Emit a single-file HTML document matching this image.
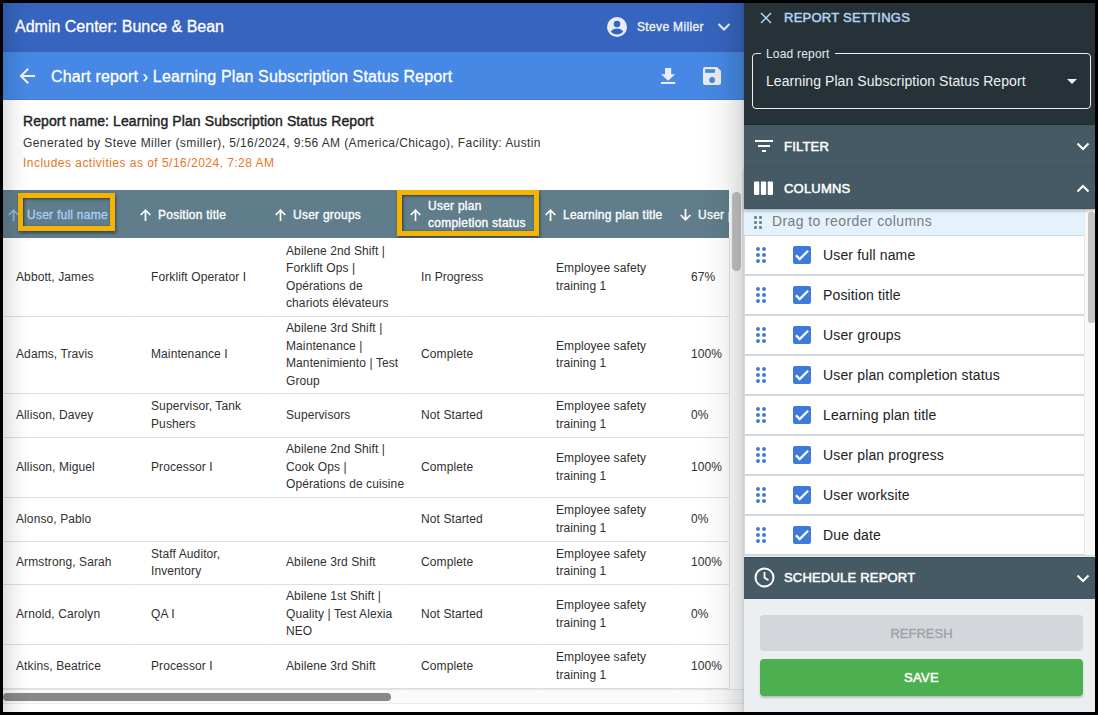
<!DOCTYPE html>
<html><head><meta charset="utf-8">
<style>
*{box-sizing:border-box;margin:0;padding:0}
html,body{width:1098px;height:715px;overflow:hidden;background:#000;font-family:"Liberation Sans",sans-serif}
.abs{position:absolute}
#app{position:absolute;left:3px;top:3px;width:1092px;height:709px;background:#fff;overflow:hidden}
#topbar{position:absolute;left:0;top:0;width:741px;height:49px;background:#3664bf;border-bottom:1px solid #3461b9}
#subbar{position:absolute;left:0;top:49px;width:741px;height:48px;background:#4688e3;border-bottom:1px solid #3c7fdd}
.wt{color:#fff;white-space:nowrap}
#left{position:absolute;left:0;top:97px;width:741px;height:612px;background:#fff}
.th{position:absolute;top:1px;height:48px;color:#fff;font-size:12px;font-weight:400;-webkit-text-stroke:0.35px currentColor;letter-spacing:0.25px;white-space:nowrap}
.cellw{position:absolute;width:135px;padding-left:13px;padding-top:1px;display:flex;align-items:center}
.cell{font-size:12px;line-height:17.5px;color:#303030;letter-spacing:0.1px;white-space:nowrap}
.rl{position:absolute;left:0;width:726px;height:1px;background:#dedede}
#panel{position:absolute;left:741px;top:0;width:351px;height:709px;background:#263238}
.bar{position:absolute;left:0;width:351px;background:#455a64}
.bt{position:absolute;left:40px;color:#fff;font-size:13px;font-weight:400;-webkit-text-stroke:0.5px #fff;letter-spacing:0.2px;white-space:nowrap}
.item{position:absolute;left:1px;width:339px;height:38px;background:#fff}
.dots{position:absolute;left:11px;top:11px}
.cb{position:absolute;left:48px;top:10px}
.it{position:absolute;left:78px;top:0;line-height:38px;font-size:14px;color:#212121;white-space:nowrap;letter-spacing:0.15px}
</style></head><body>
<div id="app">
  <div id="topbar">
    <div class="abs wt" style="left:12px;top:14px;font-size:16px;line-height:19px;-webkit-text-stroke:0.3px #fff">Admin Center: Bunce &amp; Bean</div>
    <svg class="abs" style="left:604px;top:14px" width="20" height="20" viewBox="0 0 20 20"><circle cx="10" cy="10" r="10" fill="#e9edf3"/><circle cx="10" cy="7" r="3.3" fill="#3664bf"/><path d="M3.8 14.6 C5 12.2 7.5 11.4 10 11.4 C12.5 11.4 15 12.2 16.2 14.6 C14.8 16.6 12.6 17.6 10 17.6 C7.4 17.6 5.2 16.6 3.8 14.6Z" fill="#3664bf"/></svg>
    <div class="abs wt" style="left:634px;top:17px;font-size:12px;font-weight:400;-webkit-text-stroke:0.35px #eef2f8;letter-spacing:0.35px;line-height:15px;color:#eef2f8">Steve Miller</div>
    <svg class="abs" style="left:714px;top:19px" width="14" height="10" viewBox="0 0 14 10"><path d="M1.5 2 L7 7.5 L12.5 2" stroke="#eef2f8" stroke-width="2" fill="none"/></svg>
  </div>
  <div id="subbar">
    <svg class="abs" style="left:15px;top:15px" width="19" height="19" viewBox="0 0 19 19"><path d="M17 9 H3 M10.2 1.7 L2.9 9 L10.2 16.3" stroke="#eef2f8" stroke-width="2" fill="none"/></svg>
    <div class="abs wt" style="left:48px;top:15px;font-size:16px;line-height:19px;letter-spacing:0.15px;-webkit-text-stroke:0.3px #fff">Chart report › Learning Plan Subscription Status Report</div>
    <svg class="abs" style="left:658px;top:16px" width="15" height="16" viewBox="0 0 15 16"><path d="M4 0 H10.2 V6.2 H14.2 L7.1 12.8 L0 6.2 H4Z" fill="#e9edf3"/><rect x="0" y="13.9" width="14.2" height="2.1" fill="#e9edf3"/></svg>
    <svg class="abs" style="left:700px;top:15px" width="18" height="18" viewBox="0 0 18 18"><path d="M2 0 H14 L18 4 V16 A2 2 0 0 1 16 18 H2 A2 2 0 0 1 0 16 V2 A2 2 0 0 1 2 0Z" fill="#e9edf3"/><rect x="2.2" y="2.2" width="9.8" height="3.6" fill="#4688e3"/><circle cx="9.1" cy="13" r="2.9" fill="#4688e3"/></svg>
  </div>
  <div id="left">
    <div class="abs" style="left:20px;top:13px;font-size:14px;font-weight:400;-webkit-text-stroke:0.4px #222;color:#222;letter-spacing:0.1px;white-space:nowrap;line-height:17px">Report name: Learning Plan Subscription Status Report</div>
    <div class="abs" style="left:20px;top:36px;font-size:12px;color:#333;letter-spacing:0.4px;white-space:nowrap;line-height:15px">Generated by Steve Miller (smiller), 5/16/2024, 9:56 AM (America/Chicago), Facility: Austin</div>
    <div class="abs" style="left:20px;top:56px;font-size:12px;color:#e8761f;letter-spacing:0.47px;white-space:nowrap;line-height:15px">Includes activities as of 5/16/2024, 7:28 AM</div>

    <!-- table header -->
    <div class="abs" style="left:0;top:90px;width:726px;height:48px;background:#607d8b;overflow:hidden">
      <svg class="abs" style="left:5px;top:19px" width="11" height="12" viewBox="0 0 11 12"><path d="M5.5 12 V1.2 M0.7 6 L5.5 1.2 L10.3 6" stroke="#90b4dc" stroke-width="1.7" fill="none"/></svg>
      <div class="th" style="left:24px;line-height:48px;color:#a8cdf4">User full name</div>
      <div class="abs" style="left:15px;top:3px;width:97px;height:38px;border:5px solid #f5b400;box-shadow:1px 2px 3px rgba(0,0,0,0.45),inset 1px 1px 3px rgba(0,0,0,0.55)"></div>

      <svg class="abs" style="left:137px;top:19px" width="11" height="12" viewBox="0 0 11 12"><path d="M5.5 12 V1.2 M0.7 6 L5.5 1.2 L10.3 6" stroke="#fff" stroke-width="1.7" fill="none"/></svg>
      <div class="th" style="left:155px;line-height:48px">Position title</div>

      <svg class="abs" style="left:272px;top:19px" width="11" height="12" viewBox="0 0 11 12"><path d="M5.5 12 V1.2 M0.7 6 L5.5 1.2 L10.3 6" stroke="#fff" stroke-width="1.7" fill="none"/></svg>
      <div class="th" style="left:290px;line-height:48px">User groups</div>

      <svg class="abs" style="left:407px;top:19px" width="11" height="12" viewBox="0 0 11 12"><path d="M5.5 12 V1.2 M0.7 6 L5.5 1.2 L10.3 6" stroke="#fff" stroke-width="1.7" fill="none"/></svg>
      <div class="th" style="left:425px;top:8px;line-height:16.5px">User plan<br>completion status</div>
      <div class="abs" style="left:394px;top:0px;width:142px;height:46px;border:5px solid #f5b400;box-shadow:1px 2px 3px rgba(0,0,0,0.45),inset 1px 1px 3px rgba(0,0,0,0.55)"></div>

      <svg class="abs" style="left:542px;top:19px" width="11" height="12" viewBox="0 0 11 12"><path d="M5.5 12 V1.2 M0.7 6 L5.5 1.2 L10.3 6" stroke="#fff" stroke-width="1.7" fill="none"/></svg>
      <div class="th" style="left:560px;line-height:48px">Learning plan title</div>

      <svg class="abs" style="left:677px;top:19px" width="11" height="12" viewBox="0 0 11 12"><path d="M5.5 0 V10.8 M0.7 6 L5.5 10.8 L10.3 6" stroke="#fff" stroke-width="1.7" fill="none"/></svg>
      <div class="th" style="left:695px;line-height:48px">User plan progress</div>
    </div>
    <div id="rows"><div class="cellw" style="left:0px;top:138px;height:78px"><div class="cell">Abbott, James</div></div>
<div class="cellw" style="left:135px;top:138px;height:78px"><div class="cell">Forklift Operator I</div></div>
<div class="cellw" style="left:270px;top:138px;height:78px"><div class="cell">Abilene 2nd Shift |<br>Forklift Ops |<br>Opérations de<br>chariots élévateurs</div></div>
<div class="cellw" style="left:405px;top:138px;height:78px"><div class="cell">In Progress</div></div>
<div class="cellw" style="left:540px;top:138px;height:78px"><div class="cell">Employee safety<br>training 1</div></div>
<div class="cellw" style="left:675px;top:138px;height:78px"><div class="cell">67%</div></div>
<div class="rl" style="left:0;top:216px;width:726px;background:#f0f0f0"></div>
<div class="rl" style="left:0px;top:216px;width:131px"></div>
<div class="rl" style="left:132px;top:216px;width:134px"></div>
<div class="rl" style="left:267px;top:216px;width:134px"></div>
<div class="rl" style="left:402px;top:216px;width:134px"></div>
<div class="rl" style="left:537px;top:216px;width:134px"></div>
<div class="rl" style="left:672px;top:216px;width:54px"></div>
<div class="cellw" style="left:0px;top:216px;height:77px"><div class="cell">Adams, Travis</div></div>
<div class="cellw" style="left:135px;top:216px;height:77px"><div class="cell">Maintenance I</div></div>
<div class="cellw" style="left:270px;top:216px;height:77px"><div class="cell">Abilene 3rd Shift |<br>Maintenance |<br>Mantenimiento | Test<br>Group</div></div>
<div class="cellw" style="left:405px;top:216px;height:77px"><div class="cell">Complete</div></div>
<div class="cellw" style="left:540px;top:216px;height:77px"><div class="cell">Employee safety<br>training 1</div></div>
<div class="cellw" style="left:675px;top:216px;height:77px"><div class="cell">100%</div></div>
<div class="rl" style="left:0;top:293px;width:726px;background:#f0f0f0"></div>
<div class="rl" style="left:0px;top:293px;width:131px"></div>
<div class="rl" style="left:132px;top:293px;width:134px"></div>
<div class="rl" style="left:267px;top:293px;width:134px"></div>
<div class="rl" style="left:402px;top:293px;width:134px"></div>
<div class="rl" style="left:537px;top:293px;width:134px"></div>
<div class="rl" style="left:672px;top:293px;width:54px"></div>
<div class="cellw" style="left:0px;top:293px;height:44px"><div class="cell">Allison, Davey</div></div>
<div class="cellw" style="left:135px;top:293px;height:44px"><div class="cell">Supervisor, Tank<br>Pushers</div></div>
<div class="cellw" style="left:270px;top:293px;height:44px"><div class="cell">Supervisors</div></div>
<div class="cellw" style="left:405px;top:293px;height:44px"><div class="cell">Not Started</div></div>
<div class="cellw" style="left:540px;top:293px;height:44px"><div class="cell">Employee safety<br>training 1</div></div>
<div class="cellw" style="left:675px;top:293px;height:44px"><div class="cell">0%</div></div>
<div class="rl" style="left:0;top:337px;width:726px;background:#f0f0f0"></div>
<div class="rl" style="left:0px;top:337px;width:131px"></div>
<div class="rl" style="left:132px;top:337px;width:134px"></div>
<div class="rl" style="left:267px;top:337px;width:134px"></div>
<div class="rl" style="left:402px;top:337px;width:134px"></div>
<div class="rl" style="left:537px;top:337px;width:134px"></div>
<div class="rl" style="left:672px;top:337px;width:54px"></div>
<div class="cellw" style="left:0px;top:337px;height:60px"><div class="cell">Allison, Miguel</div></div>
<div class="cellw" style="left:135px;top:337px;height:60px"><div class="cell">Processor I</div></div>
<div class="cellw" style="left:270px;top:337px;height:60px"><div class="cell">Abilene 2nd Shift |<br>Cook Ops |<br>Opérations de cuisine</div></div>
<div class="cellw" style="left:405px;top:337px;height:60px"><div class="cell">Complete</div></div>
<div class="cellw" style="left:540px;top:337px;height:60px"><div class="cell">Employee safety<br>training 1</div></div>
<div class="cellw" style="left:675px;top:337px;height:60px"><div class="cell">100%</div></div>
<div class="rl" style="left:0;top:397px;width:726px;background:#f0f0f0"></div>
<div class="rl" style="left:0px;top:397px;width:131px"></div>
<div class="rl" style="left:132px;top:397px;width:134px"></div>
<div class="rl" style="left:267px;top:397px;width:134px"></div>
<div class="rl" style="left:402px;top:397px;width:134px"></div>
<div class="rl" style="left:537px;top:397px;width:134px"></div>
<div class="rl" style="left:672px;top:397px;width:54px"></div>
<div class="cellw" style="left:0px;top:397px;height:44px"><div class="cell">Alonso, Pablo</div></div>
<div class="cellw" style="left:405px;top:397px;height:44px"><div class="cell">Not Started</div></div>
<div class="cellw" style="left:540px;top:397px;height:44px"><div class="cell">Employee safety<br>training 1</div></div>
<div class="cellw" style="left:675px;top:397px;height:44px"><div class="cell">0%</div></div>
<div class="rl" style="left:0;top:441px;width:726px;background:#f0f0f0"></div>
<div class="rl" style="left:0px;top:441px;width:131px"></div>
<div class="rl" style="left:132px;top:441px;width:134px"></div>
<div class="rl" style="left:267px;top:441px;width:134px"></div>
<div class="rl" style="left:402px;top:441px;width:134px"></div>
<div class="rl" style="left:537px;top:441px;width:134px"></div>
<div class="rl" style="left:672px;top:441px;width:54px"></div>
<div class="cellw" style="left:0px;top:441px;height:43px"><div class="cell">Armstrong, Sarah</div></div>
<div class="cellw" style="left:135px;top:441px;height:43px"><div class="cell">Staff Auditor,<br>Inventory</div></div>
<div class="cellw" style="left:270px;top:441px;height:43px"><div class="cell">Abilene 3rd Shift</div></div>
<div class="cellw" style="left:405px;top:441px;height:43px"><div class="cell">Complete</div></div>
<div class="cellw" style="left:540px;top:441px;height:43px"><div class="cell">Employee safety<br>training 1</div></div>
<div class="cellw" style="left:675px;top:441px;height:43px"><div class="cell">100%</div></div>
<div class="rl" style="left:0;top:484px;width:726px;background:#f0f0f0"></div>
<div class="rl" style="left:0px;top:484px;width:131px"></div>
<div class="rl" style="left:132px;top:484px;width:134px"></div>
<div class="rl" style="left:267px;top:484px;width:134px"></div>
<div class="rl" style="left:402px;top:484px;width:134px"></div>
<div class="rl" style="left:537px;top:484px;width:134px"></div>
<div class="rl" style="left:672px;top:484px;width:54px"></div>
<div class="cellw" style="left:0px;top:484px;height:60px"><div class="cell">Arnold, Carolyn</div></div>
<div class="cellw" style="left:135px;top:484px;height:60px"><div class="cell">QA I</div></div>
<div class="cellw" style="left:270px;top:484px;height:60px"><div class="cell">Abilene 1st Shift |<br>Quality | Test Alexia<br>NEO</div></div>
<div class="cellw" style="left:405px;top:484px;height:60px"><div class="cell">Not Started</div></div>
<div class="cellw" style="left:540px;top:484px;height:60px"><div class="cell">Employee safety<br>training 1</div></div>
<div class="cellw" style="left:675px;top:484px;height:60px"><div class="cell">0%</div></div>
<div class="rl" style="left:0;top:544px;width:726px;background:#f0f0f0"></div>
<div class="rl" style="left:0px;top:544px;width:131px"></div>
<div class="rl" style="left:132px;top:544px;width:134px"></div>
<div class="rl" style="left:267px;top:544px;width:134px"></div>
<div class="rl" style="left:402px;top:544px;width:134px"></div>
<div class="rl" style="left:537px;top:544px;width:134px"></div>
<div class="rl" style="left:672px;top:544px;width:54px"></div>
<div class="cellw" style="left:0px;top:544px;height:44px"><div class="cell">Atkins, Beatrice</div></div>
<div class="cellw" style="left:135px;top:544px;height:44px"><div class="cell">Processor I</div></div>
<div class="cellw" style="left:270px;top:544px;height:44px"><div class="cell">Abilene 3rd Shift</div></div>
<div class="cellw" style="left:405px;top:544px;height:44px"><div class="cell">Complete</div></div>
<div class="cellw" style="left:540px;top:544px;height:44px"><div class="cell">Employee safety<br>training 1</div></div>
<div class="cellw" style="left:675px;top:544px;height:44px"><div class="cell">100%</div></div>
<div class="rl" style="left:0;top:588px;width:726px;background:#f0f0f0"></div>
<div class="rl" style="left:0px;top:588px;width:131px"></div>
<div class="rl" style="left:132px;top:588px;width:134px"></div>
<div class="rl" style="left:267px;top:588px;width:134px"></div>
<div class="rl" style="left:402px;top:588px;width:134px"></div>
<div class="rl" style="left:537px;top:588px;width:134px"></div>
<div class="rl" style="left:672px;top:588px;width:54px"></div></div><!--/rows-->
  </div>

  <div class="abs" style="left:0;top:0;width:27px;height:709px;background:linear-gradient(to right,rgba(0,0,0,0.12),rgba(0,0,0,0.05) 40%,rgba(0,0,0,0.015) 75%,rgba(0,0,0,0));z-index:5"></div>
  <div class="abs" style="left:726px;top:235px;width:1px;height:450px;background:#e4e4e4;z-index:4" id="tblr"></div>
  <div class="abs" style="left:0;top:686px;width:741px;height:15px;background:#fafafa;border-top:1px solid #e6e6e6;border-bottom:1px solid #ececec"></div>
  <div class="abs" style="left:0;top:690px;width:388px;height:8px;border-radius:4px;background:#888"></div>
  <div class="abs" style="left:729px;top:189px;width:9px;height:79px;border-radius:4.5px;background:#c4c4c4;z-index:4"></div>
  <div class="abs" style="left:696px;top:0;width:45px;height:709px;background:linear-gradient(to right,rgba(0,0,0,0),rgba(0,0,0,0.04) 55%,rgba(0,0,0,0.14));z-index:5"></div>
  <div class="abs" style="left:739px;top:0;width:2px;height:709px;background:rgba(0,0,0,0.05);z-index:6"></div>
  <div id="panel">
    <svg class="abs" style="left:16px;top:9px" width="12" height="12" viewBox="0 0 12 12"><path d="M1 1 L11 11 M11 1 L1 11" stroke="#b2d3f4" stroke-width="1.5"/></svg>
    <div class="abs" style="left:40px;top:7px;font-size:13px;font-weight:400;-webkit-text-stroke:0.5px #b2d3f4;color:#b2d3f4;line-height:16px;letter-spacing:0.25px;white-space:nowrap">REPORT SETTINGS</div>
    <div class="abs" style="left:8px;top:50px;width:339px;height:56px;border:1.4px solid #eceef0;border-radius:4px"></div>
    <div class="abs" style="left:17px;top:44px;padding:0 5px 0 5px;background:#263238;font-size:12px;color:#e6e9ec;line-height:14px;white-space:nowrap;letter-spacing:0.2px">Load report</div>
    <div class="abs" style="left:22px;top:70px;font-size:14px;color:#eef0f2;line-height:17px;white-space:nowrap;letter-spacing:0.07px">Learning Plan Subscription Status Report</div>
    <svg class="abs" style="left:323px;top:76px" width="10" height="5" viewBox="0 0 10 5"><path d="M0 0 H10 L5 5Z" fill="#eef0f2"/></svg>

    <div class="abs" style="left:0;top:121px;width:351px;height:1px;background:#212b31"></div><div class="bar" style="top:122px;height:42px;border-bottom:1px solid #415560"></div>
    <svg class="abs" style="left:11px;top:137px" width="18" height="12" viewBox="0 0 18 12"><rect x="0" y="0" width="18" height="2" fill="#fff"/><rect x="3" y="5" width="12" height="2" fill="#fff"/><rect x="7" y="10" width="4" height="2" fill="#fff"/></svg>
    <div class="bt" style="top:136px;line-height:16px">FILTER</div>
    <svg class="abs" style="left:332px;top:139px" width="14" height="9" viewBox="0 0 14 9"><path d="M1.5 1.5 L7 7 L12.5 1.5" stroke="#fff" stroke-width="2" fill="none"/></svg>

    <div class="bar" style="top:164px;height:42px;border-bottom:1px solid #3f535c;box-shadow:0 2px 3px rgba(0,0,0,0.25);z-index:2"></div>
    <svg class="abs" style="left:10px;top:178px;z-index:3" width="19" height="14" viewBox="0 0 19 14"><rect x="0" y="0.5" width="5.3" height="13.5" rx="1" fill="#fff"/><rect x="6.85" y="0.5" width="5.3" height="13.5" rx="1" fill="#fff"/><rect x="13.7" y="0.5" width="5.3" height="13.5" rx="1" fill="#fff"/></svg>
    <div class="bt" style="top:178px;line-height:16px;z-index:3">COLUMNS</div>
    <svg class="abs" style="left:332px;top:180.5px;z-index:3" width="14" height="9" viewBox="0 0 14 9"><path d="M1.5 7.5 L7 2 L12.5 7.5" stroke="#fff" stroke-width="2" fill="none"/></svg>

    <div class="abs" style="left:0;top:206px;width:351px;height:348px;background:#cfd8dc;overflow:hidden;border-bottom:1px solid #eef0f1">
      <div class="abs" style="left:0;top:0;width:340px;height:26px;background:#e3f2fd"></div>
      <svg class="abs" style="left:10px;top:7px" width="8" height="13" viewBox="0 0 8 13"><g fill="#6f8693"><rect x="0" y="0" width="3" height="3" rx="1"/><rect x="5" y="0" width="3" height="3" rx="1"/><rect x="0" y="5" width="3" height="3" rx="1"/><rect x="5" y="5" width="3" height="3" rx="1"/><rect x="0" y="10" width="3" height="3" rx="1"/><rect x="5" y="10" width="3" height="3" rx="1"/></g></svg>
      <div class="abs" style="left:28px;top:4px;font-size:14px;color:#7b7b7b;line-height:16px;letter-spacing:0.4px;white-space:nowrap">Drag to reorder columns</div>
      <div id="items"><div class="item" style="top:27px"><svg class="dots" width="11" height="17" viewBox="0 0 11 17"><g fill="#3c7bd9"><circle cx="2" cy="2" r="1.95"/><circle cx="8" cy="2" r="1.95"/><circle cx="2" cy="8" r="1.95"/><circle cx="8" cy="8" r="1.95"/><circle cx="2" cy="14" r="1.95"/><circle cx="8" cy="14" r="1.95"/></g></svg><svg class="cb" width="18" height="18" viewBox="0 0 18 18"><rect width="18" height="18" rx="2" fill="#3c7bd9"/><path d="M2.9 9.3 L6.7 13.1 L15.1 4.7" stroke="#fff" stroke-width="2.2" fill="none"/></svg><div class="it">User full name</div></div>
<div class="item" style="top:67px"><svg class="dots" width="11" height="17" viewBox="0 0 11 17"><g fill="#3c7bd9"><circle cx="2" cy="2" r="1.95"/><circle cx="8" cy="2" r="1.95"/><circle cx="2" cy="8" r="1.95"/><circle cx="8" cy="8" r="1.95"/><circle cx="2" cy="14" r="1.95"/><circle cx="8" cy="14" r="1.95"/></g></svg><svg class="cb" width="18" height="18" viewBox="0 0 18 18"><rect width="18" height="18" rx="2" fill="#3c7bd9"/><path d="M2.9 9.3 L6.7 13.1 L15.1 4.7" stroke="#fff" stroke-width="2.2" fill="none"/></svg><div class="it">Position title</div></div>
<div class="item" style="top:107px"><svg class="dots" width="11" height="17" viewBox="0 0 11 17"><g fill="#3c7bd9"><circle cx="2" cy="2" r="1.95"/><circle cx="8" cy="2" r="1.95"/><circle cx="2" cy="8" r="1.95"/><circle cx="8" cy="8" r="1.95"/><circle cx="2" cy="14" r="1.95"/><circle cx="8" cy="14" r="1.95"/></g></svg><svg class="cb" width="18" height="18" viewBox="0 0 18 18"><rect width="18" height="18" rx="2" fill="#3c7bd9"/><path d="M2.9 9.3 L6.7 13.1 L15.1 4.7" stroke="#fff" stroke-width="2.2" fill="none"/></svg><div class="it">User groups</div></div>
<div class="item" style="top:147px"><svg class="dots" width="11" height="17" viewBox="0 0 11 17"><g fill="#3c7bd9"><circle cx="2" cy="2" r="1.95"/><circle cx="8" cy="2" r="1.95"/><circle cx="2" cy="8" r="1.95"/><circle cx="8" cy="8" r="1.95"/><circle cx="2" cy="14" r="1.95"/><circle cx="8" cy="14" r="1.95"/></g></svg><svg class="cb" width="18" height="18" viewBox="0 0 18 18"><rect width="18" height="18" rx="2" fill="#3c7bd9"/><path d="M2.9 9.3 L6.7 13.1 L15.1 4.7" stroke="#fff" stroke-width="2.2" fill="none"/></svg><div class="it">User plan completion status</div></div>
<div class="item" style="top:187px"><svg class="dots" width="11" height="17" viewBox="0 0 11 17"><g fill="#3c7bd9"><circle cx="2" cy="2" r="1.95"/><circle cx="8" cy="2" r="1.95"/><circle cx="2" cy="8" r="1.95"/><circle cx="8" cy="8" r="1.95"/><circle cx="2" cy="14" r="1.95"/><circle cx="8" cy="14" r="1.95"/></g></svg><svg class="cb" width="18" height="18" viewBox="0 0 18 18"><rect width="18" height="18" rx="2" fill="#3c7bd9"/><path d="M2.9 9.3 L6.7 13.1 L15.1 4.7" stroke="#fff" stroke-width="2.2" fill="none"/></svg><div class="it">Learning plan title</div></div>
<div class="item" style="top:227px"><svg class="dots" width="11" height="17" viewBox="0 0 11 17"><g fill="#3c7bd9"><circle cx="2" cy="2" r="1.95"/><circle cx="8" cy="2" r="1.95"/><circle cx="2" cy="8" r="1.95"/><circle cx="8" cy="8" r="1.95"/><circle cx="2" cy="14" r="1.95"/><circle cx="8" cy="14" r="1.95"/></g></svg><svg class="cb" width="18" height="18" viewBox="0 0 18 18"><rect width="18" height="18" rx="2" fill="#3c7bd9"/><path d="M2.9 9.3 L6.7 13.1 L15.1 4.7" stroke="#fff" stroke-width="2.2" fill="none"/></svg><div class="it">User plan progress</div></div>
<div class="item" style="top:267px"><svg class="dots" width="11" height="17" viewBox="0 0 11 17"><g fill="#3c7bd9"><circle cx="2" cy="2" r="1.95"/><circle cx="8" cy="2" r="1.95"/><circle cx="2" cy="8" r="1.95"/><circle cx="8" cy="8" r="1.95"/><circle cx="2" cy="14" r="1.95"/><circle cx="8" cy="14" r="1.95"/></g></svg><svg class="cb" width="18" height="18" viewBox="0 0 18 18"><rect width="18" height="18" rx="2" fill="#3c7bd9"/><path d="M2.9 9.3 L6.7 13.1 L15.1 4.7" stroke="#fff" stroke-width="2.2" fill="none"/></svg><div class="it">User worksite</div></div>
<div class="item" style="top:307px"><svg class="dots" width="11" height="17" viewBox="0 0 11 17"><g fill="#3c7bd9"><circle cx="2" cy="2" r="1.95"/><circle cx="8" cy="2" r="1.95"/><circle cx="2" cy="8" r="1.95"/><circle cx="8" cy="8" r="1.95"/><circle cx="2" cy="14" r="1.95"/><circle cx="8" cy="14" r="1.95"/></g></svg><svg class="cb" width="18" height="18" viewBox="0 0 18 18"><rect width="18" height="18" rx="2" fill="#3c7bd9"/><path d="M2.9 9.3 L6.7 13.1 L15.1 4.7" stroke="#fff" stroke-width="2.2" fill="none"/></svg><div class="it">Due date</div></div></div><!--/items-->
      <div class="abs" style="left:340px;top:0;width:11px;height:346px;background:#f8f8f8;border-left:1px solid #e8e8e8"></div>
      <div class="abs" style="left:344px;top:3px;width:6.5px;height:111px;border-radius:3px;background:#c4c4c4"></div>
    </div>

    <div class="bar" style="top:554px;height:42px;border-top:1px solid #37474f"></div>
    <svg class="abs" style="left:9.5px;top:564px" width="21" height="21" viewBox="0 0 21 21"><circle cx="10.5" cy="10.5" r="9" stroke="#fff" stroke-width="2" fill="none"/><path d="M10.5 5 V10.8 L14.5 13.2" stroke="#fff" stroke-width="1.8" fill="none"/></svg>
    <div class="bt" style="top:567px;line-height:16px">SCHEDULE REPORT</div>
    <svg class="abs" style="left:332px;top:571px" width="14" height="9" viewBox="0 0 14 9"><path d="M1.5 1.5 L7 7 L12.5 1.5" stroke="#fff" stroke-width="2" fill="none"/></svg>

    <div class="abs" style="left:0;top:596px;width:351px;height:113px;background:#eceff1"></div>
    <div class="abs" style="left:16px;top:612px;width:323px;height:36px;border-radius:4px;background:#d3d7db;color:#9fa3a7;font-size:13px;font-weight:400;-webkit-text-stroke:0.4px #9fa3a7;line-height:38px;text-align:center;letter-spacing:0px">REFRESH</div>
    <div class="abs" style="left:16px;top:656px;width:323px;height:37px;border-radius:4px;background:#4caf50;color:#fff;font-size:13px;font-weight:400;-webkit-text-stroke:0.5px #fff;letter-spacing:0.3px;line-height:37px;text-align:center;box-shadow:0 2px 2px rgba(0,0,0,0.2)">SAVE</div>
  </div>
</div>
</body></html>
